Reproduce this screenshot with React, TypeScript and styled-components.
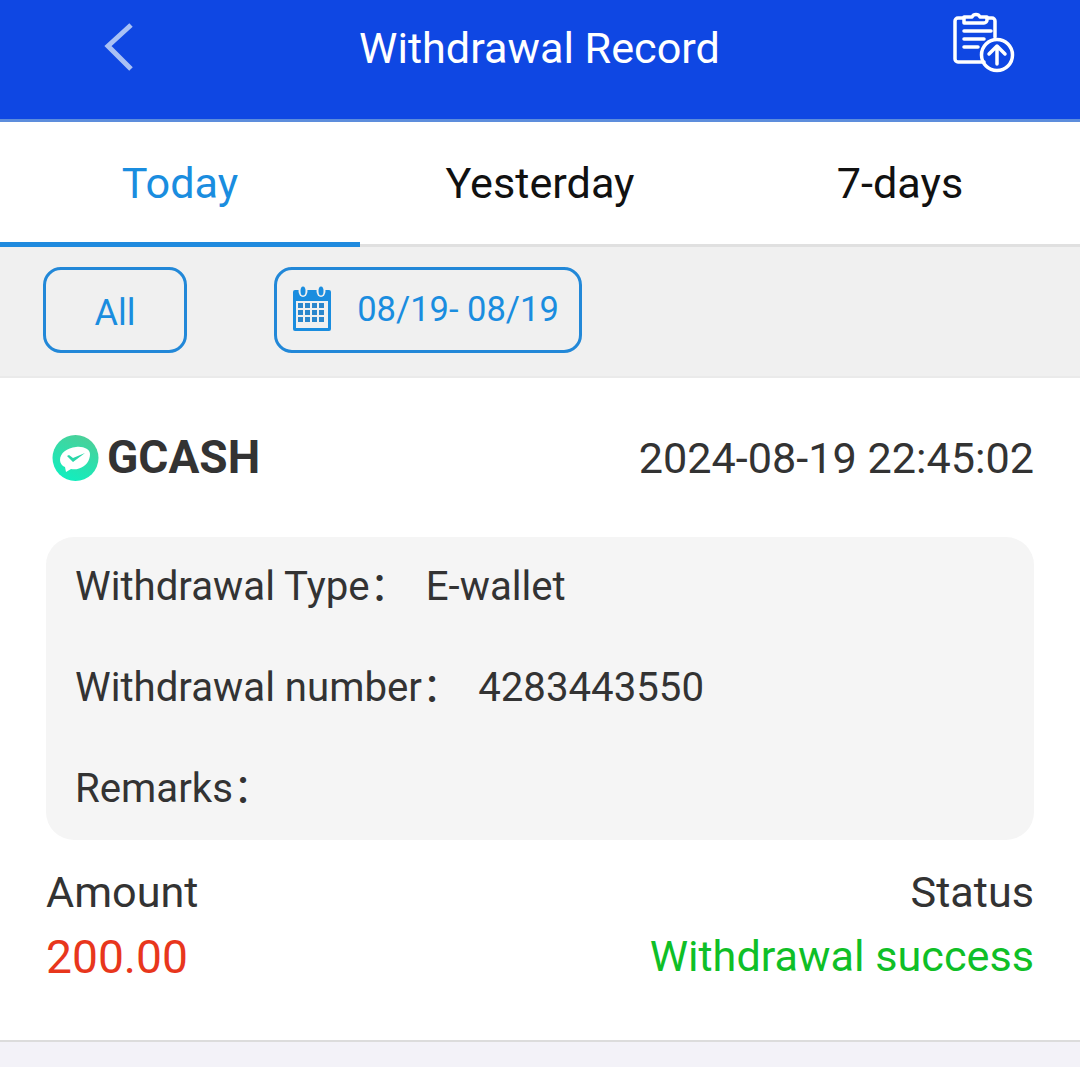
import styled, { createGlobalStyle } from "styled-components";

const GlobalStyle = createGlobalStyle`
    html, body {
        margin: 0;
        padding: 0;
        background: #f3f2f8;
        font-family: Roboto, "Noto Sans CJK SC", "Liberation Sans", sans-serif;
    }
`;

const Page = styled.div`
    width: 1080px;
    height: 1067px;
    overflow: hidden;
    display: flex;
    flex-direction: column;
    background: #f3f2f8;
`;

const Header = styled.header`
    height: 122px;
    flex: none;
    box-sizing: border-box;
    border-bottom: 3px solid #5d8ddc;
    background: #0f47e3;
    display: flex;
    justify-content: space-between;
    align-items: center;
    padding: 0 64px 24px 103px;
    h1 {
        margin: 2px 0 0;
        font-size: 43.2px;
        font-weight: 400;
        color: #fff;
        line-height: 48px;
    }
`;

const UploadSvg = styled.svg`
    margin: 0 0 11px 4px;
`;

const Tabs = styled.nav`
    height: 125px;
    flex: none;
    box-sizing: border-box;
    background: #fff;
    border-bottom: 3px solid #e0e0e0;
    display: grid;
    grid-template-columns: repeat(3, 360px);
`;

const Tab = styled.div<{ $active?: boolean }>`
    font-size: 43.2px;
    line-height: 124px;
    text-align: center;
    height: 125px;
    box-sizing: border-box;
    color: ${(p) => (p.$active ? "#1a8ddf" : "#111")};
    border-bottom: ${(p) => (p.$active ? "5px solid #1f8ade" : "none")};
`;

const FilterBar = styled.div`
    height: 131px;
    flex: none;
    box-sizing: border-box;
    background: #f0f0f0;
    border-bottom: 2px solid #eaeaea;
    padding: 20px 0 0 43px;
    display: flex;
    align-items: flex-start;
    gap: 87px;
`;

const FilterButton = styled.div<{ $wide?: boolean }>`
    height: 86px;
    width: ${(p) => (p.$wide ? "308px" : "144px")};
    box-sizing: border-box;
    border: 3px solid #2288d8;
    border-radius: 18px;
    color: #1a8ddf;
    font-size: ${(p) => (p.$wide ? "34.5px" : "36px")};
    padding: ${(p) => (p.$wide ? "0 5px 2px 0" : "5px 0 0")};
    display: flex;
    align-items: center;
    justify-content: center;
    gap: 25px;
`;

const Record = styled.section`
    height: 664px;
    flex: none;
    box-sizing: border-box;
    background: #fff;
    padding: 0 46px;
    border-bottom: 2px solid #dcdcdc;
    display: flex;
    flex-direction: column;
`;

const RecordTop = styled.div`
    height: 159px;
    flex: none;
    display: flex;
    align-items: center;
    justify-content: space-between;
`;

const Brand = styled.div`
    display: flex;
    align-items: center;
    gap: 8px;
    margin-left: 6px;
    font-size: 46px;
    font-weight: 700;
    color: #333;
    span {
        position: relative;
        top: -1px;
    }
`;

const Timestamp = styled.div`
    font-size: 43.2px;
    line-height: 52px;
    padding-top: 2px;
    color: #333;
`;

const InfoPanel = styled.div`
    height: 303px;
    flex: none;
    box-sizing: border-box;
    background: #f5f5f5;
    border-radius: 28px;
    padding: 0 29px;
    display: grid;
    grid-auto-rows: 101px;
`;

const InfoRow = styled.div`
    font-size: 40.2px;
    line-height: 50px;
    color: #333;
    display: flex;
    align-items: baseline;
    gap: 16px;
    padding-top: 25px;
    box-sizing: border-box;
`;

const Summary = styled.div`
    margin-top: 28px;
    display: grid;
    grid-template-columns: auto auto;
    justify-content: space-between;
    row-gap: 14px;
    font-size: 43.2px;
    color: #333;
    line-height: 50px;
`;

const StatusLabel = styled.div`
    text-align: right;
`;

const Amount = styled.div`
    color: #e8361c;
    font-size: 46.2px;
`;

const Success = styled.div`
    color: #0fbf27;
    text-align: right;
`;

const BackIcon = () => (
    <svg width="30" height="50" viewBox="0 0 30 50" fill="none" stroke="#a9c1f5" strokeWidth="5">
        <path d="M28 2L5 23L28 46" />
    </svg>
);

const UploadIcon = () => (
    <UploadSvg width="66" height="66" viewBox="0 0 66 66" fill="none" stroke="#fff" strokeWidth="3.500" strokeLinecap="round" strokeLinejoin="round">
        <path d="M45 28V12a3 3 0 0 0-3-3h-5M13 9H8a3 3 0 0 0-3 3v38a3 3 0 0 0 3 3h26" />
        <path d="M14 14V8h8a4.500 4.500 0 0 1 8 0h7v3a3 3 0 0 1-3 3z" />
        <path d="M14 22h27M14 30h20M14 38h14" />
        <circle cx="47" cy="46" r="15.500" />
        <path d="M47 55V38M39 45l8-8 8 8" />
    </UploadSvg>
);

const CalendarIcon = () => (
    <svg width="40" height="46" viewBox="0 0 40 46">
        <rect x="1" y="4" width="38" height="41" rx="2" fill="#1a8ddf" />
        <ellipse cx="11" cy="5" rx="4.500" ry="6" fill="#f0f0f0" />
        <ellipse cx="29" cy="5" rx="4.500" ry="6" fill="#f0f0f0" />
        <ellipse cx="11" cy="5" rx="2.500" ry="4.500" fill="#1a8ddf" />
        <ellipse cx="29" cy="5" rx="2.500" ry="4.500" fill="#1a8ddf" />
        <rect x="4" y="15" width="32" height="27" fill="#f0f0f0" />
        {[17, 24, 31].map((y) =>
            [6, 13, 20, 27].map((x) => (
                <rect key={`${x}-${y}`} x={x} y={y} width="5" height="5" fill="#2a86cc" />
            ))
        )}
    </svg>
);

const GcashIcon = () => (
    <svg width="47" height="47" viewBox="0 0 47 47">
        <defs>
            <linearGradient id="gc" x1="0.3" y1="1" x2="0.7" y2="0">
                <stop offset="0" stopColor="#10efc0" />
                <stop offset="1" stopColor="#4ccf98" />
            </linearGradient>
        </defs>
        <circle cx="23.500" cy="24" r="23" fill="url(#gc)" />
        <path d="M38 20c0-5-7-8-14-7C15 14 8 19 8 26c0 3 2 6 5 7l1 5 5-3c3 .5 5 .5 8-.5 7-2 11-8 11-14.500z" fill="#fff" />
        <path d="M15 22l2-1 4 3 12-5-12 9z" fill="#2ad6a8" />
    </svg>
);

export default function App() {
    return (
        <Page>
            <GlobalStyle />
            <Header>
                <BackIcon />
                <h1>Withdrawal Record</h1>
                <UploadIcon />
            </Header>
            <Tabs>
                <Tab $active>Today</Tab>
                <Tab>Yesterday</Tab>
                <Tab>7-days</Tab>
            </Tabs>
            <FilterBar>
                <FilterButton>All</FilterButton>
                <FilterButton $wide>
                    <CalendarIcon />
                    08/19- 08/19
                </FilterButton>
            </FilterBar>
            <Record>
                <RecordTop>
                    <Brand>
                        <GcashIcon />
                        <span>GCASH</span>
                    </Brand>
                    <Timestamp>2024-08-19 22:45:02</Timestamp>
                </RecordTop>
                <InfoPanel>
                    <InfoRow>
                        <span>Withdrawal Type：</span>
                        <span>E-wallet</span>
                    </InfoRow>
                    <InfoRow>
                        <span>Withdrawal number：</span>
                        <span>4283443550</span>
                    </InfoRow>
                    <InfoRow>
                        <span>Remarks：</span>
                    </InfoRow>
                </InfoPanel>
                <Summary>
                    <div>Amount</div>
                    <StatusLabel>Status</StatusLabel>
                    <Amount>200.00</Amount>
                    <Success>Withdrawal success</Success>
                </Summary>
            </Record>
        </Page>
    );
}
